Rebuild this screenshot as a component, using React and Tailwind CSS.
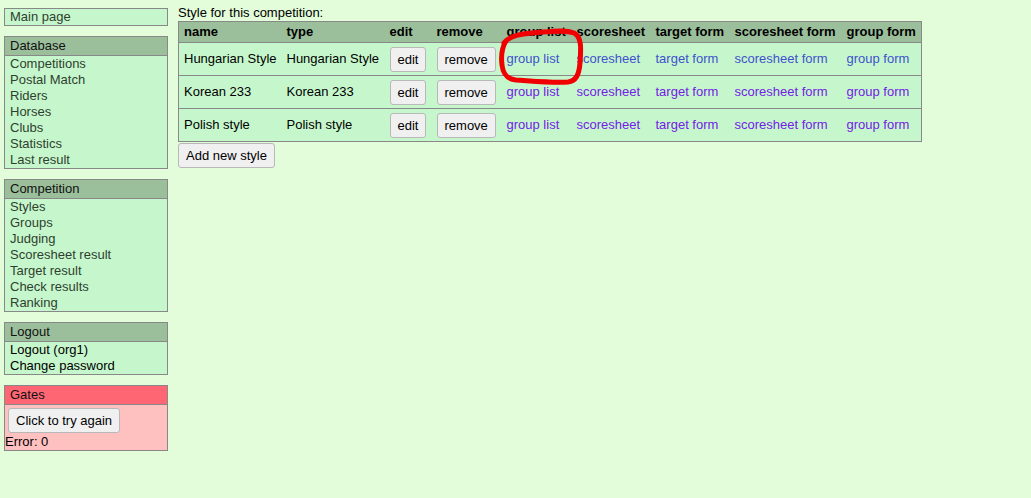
import React from "react";

const font = { fontFamily: '"Liberation Sans", Arial, sans-serif' };

const styles = [
  { name: "Hungarian Style", type: "Hungarian Style", fresh: true },
  { name: "Korean 233", type: "Korean 233" },
  { name: "Polish style", type: "Polish style" },
];

const linkCols = ["group list", "scoresheet", "target form", "scoresheet form", "group form"];

const MenuBox = ({ title, items, dark }) => (
  <div className="border border-[#888] bg-[#c6f7cc] mb-[10px]">
    <div className="bg-[#9bbf9b] border-b border-[#888] h-[19px] leading-[18px] pl-[5px] text-[#111]">{title}</div>
    <div>
      {items.map((it) => (
        <div key={it} className={`pl-[5px] h-[16px] leading-[15px] ${dark ? "text-black" : "text-[#2f3f2f]"}`}>{it}</div>
      ))}
    </div>
  </div>
);

const Btn = ({ children, className = "" }) => (
  <button className={`bg-[#f0f0f0] border border-[#b8b8b8] rounded-[3px] text-black px-[7px] h-[25px] leading-[23px] ${className}`}>
    {children}
  </button>
);

export default function App() {
  return (
    <div className="min-h-screen bg-[#e3fcda] text-[13px] text-black flex gap-[10px] pl-[4px] pt-[8px]" style={font}>
      {/* sidebar */}
      <div className="w-[164px] shrink-0">
        <div className="border border-[#888] bg-[#c6f7cc] h-[18px] leading-[16px] pl-[5px] text-[#2f3f2f] mb-[10px]">Main page</div>
        <MenuBox
          title="Database"
          items={["Competitions", "Postal Match", "Riders", "Horses", "Clubs", "Statistics", "Last result"]}
        />
        <MenuBox
          title="Competition"
          items={["Styles", "Groups", "Judging", "Scoresheet result", "Target result", "Check results", "Ranking"]}
        />
        <MenuBox title="Logout" items={["Logout (org1)", "Change password"]} dark />
        <div className="border border-[#888] bg-[#ffc0c0]">
          <div className="bg-[#ff6673] border-b border-[#888] h-[19px] leading-[18px] pl-[5px] text-[#111]">Gates</div>
          <div className="pt-[3px] pl-[3px]">
            <Btn>Click to try again</Btn>
          </div>
          <div className="leading-[16px] mt-[1px]">Error: 0</div>
        </div>
      </div>

      {/* main */}
      <div className="relative">
        <div className="leading-[14px] -mt-[2px] mb-[1px]">Style for this competition:</div>
        <table className="border-collapse border border-[#888] bg-[#c6f7cc]">
          <thead>
            <tr className="bg-[#9bbf9b] h-[21px]">
              {[
                ["name", "w-[103px]"],
                ["type", "w-[103px]"],
                ["edit", "w-[47px]"],
                ["remove", "w-[70px]"],
                ["group list", "w-[70px]"],
                ["scoresheet", "w-[79px]"],
                ["target form", "w-[79px]"],
                ["scoresheet form", "w-[112px]"],
                ["group form", "w-[80px]"],
              ].map(([h, w]) => (
                <th key={h} className={`${w} text-left font-bold pl-[5px] pr-[1px] whitespace-nowrap`}>{h}</th>
              ))}
            </tr>
          </thead>
          <tbody>
            {styles.map((s) => (
              <tr key={s.name} className="h-[33px] border-t border-[#888]">
                <td className="pl-[5px] whitespace-nowrap">{s.name}</td>
                <td className="pl-[5px] whitespace-nowrap">{s.type}</td>
                <td className="pl-[5px]"><Btn>edit</Btn></td>
                <td className="pl-[5px]"><Btn>remove</Btn></td>
                {linkCols.map((l) => (
                  <td key={l} className="pl-[5px] whitespace-nowrap">
                    <a href="#" className={s.fresh ? "text-[#3f51cc]" : "text-[#7420e6]"}>{l}</a>
                  </td>
                ))}
              </tr>
            ))}
          </tbody>
        </table>
        <Btn className="mt-[1px]">Add new style</Btn>

        {/* red hand-drawn marker */}
        <svg className="absolute left-[314px] top-[15px] pointer-events-none" width="100" height="70" viewBox="0 0 100 70">
          <path
            d="M12 20 C16 14 26 11 40 10 C56 9 72 6 82 10 C90 14 89 26 88 40 C87 52 84 58 76 59 C60 60 40 58 24 57 C14 56 11 50 10 42 C9 34 9 26 14 18"
            fill="none"
            stroke="#f00000"
            strokeWidth="5"
            strokeLinecap="round"
            strokeLinejoin="round"
          />
        </svg>
      </div>
    </div>
  );
}
